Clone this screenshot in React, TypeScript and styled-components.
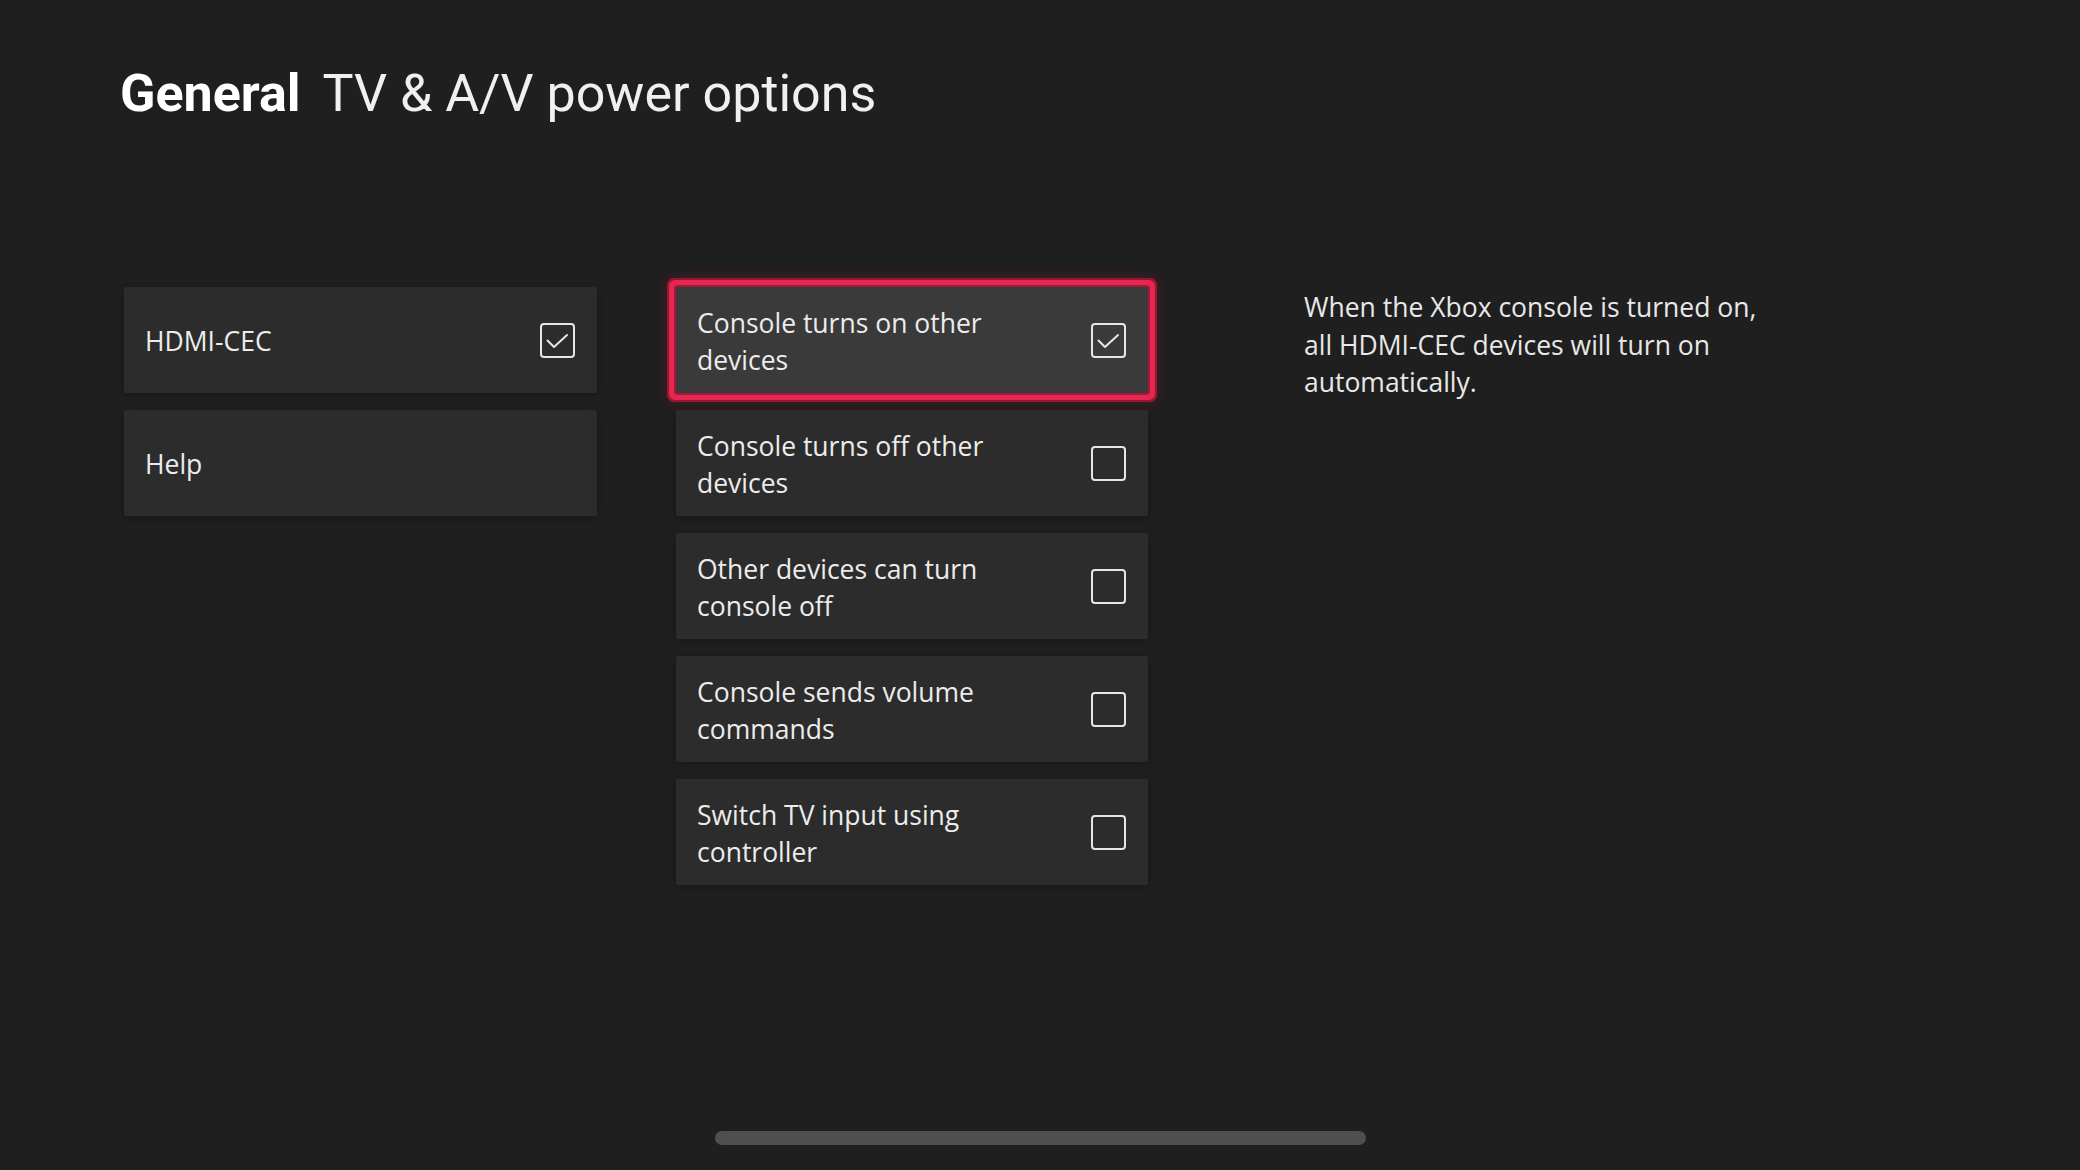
import styled, { createGlobalStyle } from "styled-components";

const GlobalStyle = createGlobalStyle`
  html, body {
    margin: 0;
    padding: 0;
    background-color: #1f1f1f;
  }
  * {
    box-sizing: border-box;
  }
`;

const Page = styled.div`
  display: flex;
  flex-direction: column;
  height: 100vh;
  overflow: hidden;
  padding-left: 121px;
  background-color: #1f1f1f;
  color: #ececec;
  font-family: "Open Sans", "Noto Sans", sans-serif;
`;

const Title = styled.h1`
  margin: 68px 0 0 -1px;
  font-family: Roboto, "Liberation Sans", sans-serif;
  font-size: 52px;
  line-height: 52px;
  font-weight: 400;
  color: #f0f0f0;
`;

const Section = styled.span`
  font-weight: 700;
  color: #ffffff;
  margin-right: 10px;
`;

const Columns = styled.div`
  display: flex;
  align-items: flex-start;
  margin: 167px 0 0 3px;
`;

const Stack = styled.div<{ width: number }>`
  display: flex;
  flex-direction: column;
  gap: 17px;
  width: ${(props) => props.width}px;
  flex-shrink: 0;
`;

const Tile = styled.div<{ selected?: boolean }>`
  display: flex;
  align-items: center;
  justify-content: space-between;
  height: 106px;
  padding: 3px 22px 0 21px;
  border-radius: 2px;
  background-color: ${(props) => (props.selected ? "#3a3a3a" : "#2c2c2c")};
  box-shadow: ${(props) =>
    props.selected
      ? "0 0 0 2px #a3173a, 0 0 0 7px #e4284f, 0 0 0 9px #9a1535, 0 0 14px 10px rgba(200, 20, 60, 0.22)"
      : "0 2px 6px rgba(0, 0, 0, 0.25)"};
  position: relative;
  z-index: ${(props) => (props.selected ? 1 : 0)};
`;

const Label = styled.span`
  font-size: 26.5px;
  line-height: 37px;
  color: #ececec;
  max-width: 320px;
`;

const Box = styled.svg`
  flex-shrink: 0;
  width: 35px;
  height: 35px;
  margin-top: -3px;
`;

const Description = styled.p`
  margin: 2px 0 0 156px;
  width: 480px;
  font-size: 26.5px;
  line-height: 37.5px;
  color: #e8e8e8;
`;

const Footer = styled.div`
  display: flex;
  justify-content: center;
  margin: auto 0 25px -121px;
`;

const ScrollThumb = styled.div`
  width: 651px;
  height: 14px;
  border-radius: 7px;
  background-color: #4f4f4f;
`;

function Checkbox({ checked }: { checked: boolean }) {
  return (
    <Box viewBox="0 0 35 35">
      <rect
        x="1"
        y="1"
        width="33"
        height="33"
        rx="3"
        fill="none"
        stroke="#e6e6e6"
        strokeWidth="2"
      />
      {checked && (
        <path
          d="M7.5 17.5 L14 24 L27 12"
          fill="none"
          stroke="#e6e6e6"
          strokeWidth="2"
          strokeLinecap="round"
          strokeLinejoin="round"
        />
      )}
    </Box>
  );
}

const options = [
  { label: "Console turns on other devices", checked: true },
  { label: "Console turns off other devices", checked: false },
  { label: "Other devices can turn console off", checked: false },
  { label: "Console sends volume commands", checked: false },
  { label: "Switch TV input using controller", checked: false },
];

export default function App() {
  return (
    <>
      <GlobalStyle />
      <Page>
        <Title>
          <Section>General</Section> TV &amp; A/V power options
        </Title>
        <Columns>
          <Stack width={473}>
            <Tile>
              <Label>HDMI-CEC</Label>
              <Checkbox checked />
            </Tile>
            <Tile>
              <Label>Help</Label>
            </Tile>
          </Stack>
          <Stack width={472} style={{ marginLeft: 79 }}>
            {options.map((option, i) => (
              <Tile key={option.label} selected={i === 0}>
                <Label>{option.label}</Label>
                <Checkbox checked={option.checked} />
              </Tile>
            ))}
          </Stack>
          <Description>
            When the Xbox console is turned on, all HDMI-CEC devices will turn
            on automatically.
          </Description>
        </Columns>
        <Footer>
          <ScrollThumb />
        </Footer>
      </Page>
    </>
  );
}
